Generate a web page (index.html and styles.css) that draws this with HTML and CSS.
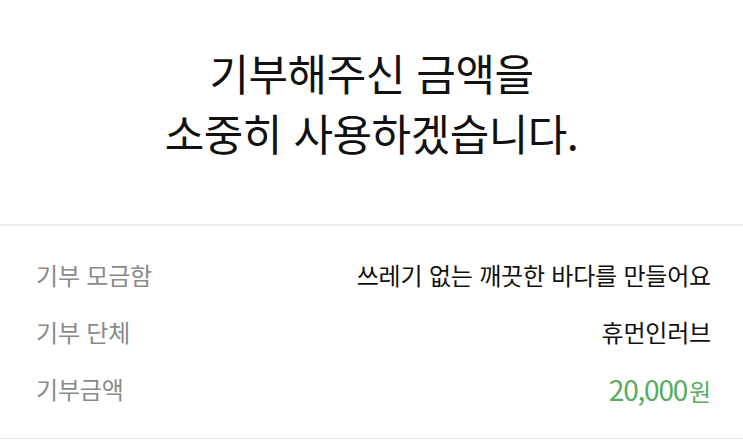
FILE: index.html
```html
<!DOCTYPE html>
<html lang="ko">
<head>
<meta charset="utf-8">
<link rel="stylesheet" href="styles.css">
</head>
<body>
<main class="page">
  <section class="hero">
    <h1 class="hero-title">기부해주신 금액을<br>소중히 사용하겠습니다.</h1>
  </section>
  <section class="details">
    <div class="row">
      <span class="label">기부 모금함</span>
      <span class="value">쓰레기 없는 깨끗한 바다를 만들어요</span>
    </div>
    <div class="row">
      <span class="label">기부 단체</span>
      <span class="value">휴먼인러브</span>
    </div>
    <div class="row">
      <span class="label">기부금액</span>
      <span class="value value-amount"><span class="amount-num">20,000</span>원</span>
    </div>
  </section>
</main>
</body>
</html>
```

FILE: styles.css
```css
html, body {
  margin: 0;
  padding: 0;
  background: #ffffff;
}

body {
  font-family: "Noto Sans CJK KR", "Noto Sans", sans-serif;
  color: #111111;
}

.page {
  width: 743px;
  height: 441px;
  overflow: hidden;
}

.hero {
  box-sizing: border-box;
  height: 226px;
  padding-top: 42px;
  border-bottom: 2px solid #eeeeee;
}

.hero-title {
  margin: 0;
  text-align: center;
  font-size: 43px;
  font-weight: 400;
  line-height: 60px;
  letter-spacing: -0.5px;
  color: #111111;
}

.details {
  box-sizing: border-box;
  height: 213px;
  padding: 20px 32px 0 36px;
  border-bottom: 1px solid #e6e6e6;
}

.row {
  height: 57px;
  display: flex;
  align-items: center;
  justify-content: space-between;
  font-size: 24px;
  letter-spacing: -0.2px;
}

.label {
  color: #8a8a8a;
}

.value {
  color: #111111;
  font-weight: 400;
}

.value-amount {
  color: #53ad5b;
}

.amount-num {
  font-size: 28px;
  letter-spacing: -1.2px;
  margin-right: 2px;
}
```
